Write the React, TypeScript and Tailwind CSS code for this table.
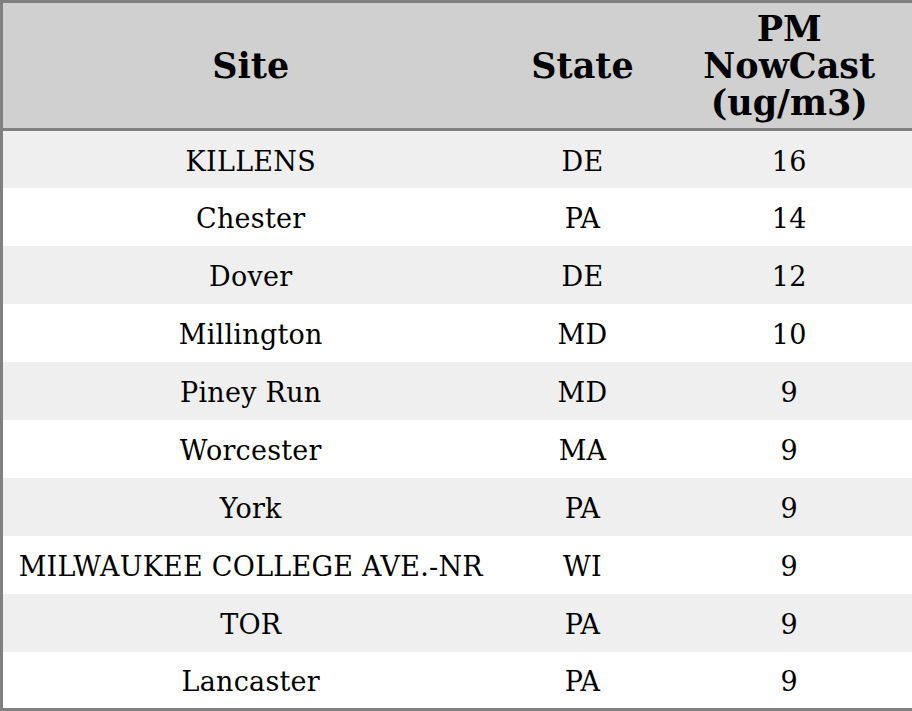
import React from 'react';

const rows = [
  { site: 'KILLENS', state: 'DE', pm: 16 },
  { site: 'Chester', state: 'PA', pm: 14 },
  { site: 'Dover', state: 'DE', pm: 12 },
  { site: 'Millington', state: 'MD', pm: 10 },
  { site: 'Piney Run', state: 'MD', pm: 9 },
  { site: 'Worcester', state: 'MA', pm: 9 },
  { site: 'York', state: 'PA', pm: 9 },
  { site: 'MILWAUKEE COLLEGE AVE.-NR', state: 'WI', pm: 9 },
  { site: 'TOR', state: 'PA', pm: 9 },
  { site: 'Lancaster', state: 'PA', pm: 9 },
];

export default function App() {
  return (
    <div className="w-[912px] h-[711px] bg-white" style={{ fontFamily: '"DejaVu Serif", serif' }}>
      <table className="w-[912px] border-collapse table-fixed border-[3px] border-[#808080] text-black">
        <colgroup>
          <col className="w-[497px]" />
          <col className="w-[168px]" />
          <col className="w-[247px]" />
        </colgroup>
        <thead>
          <tr className="bg-[#d0d0d0] border-b-[3px] border-[#808080]">
            <th className="h-[128px] p-0 text-[35px] leading-[37px] font-bold text-center align-middle">Site</th>
            <th className="h-[128px] p-0 text-[35px] leading-[37px] font-bold text-center align-middle">State</th>
            <th className="h-[128px] p-0 text-[35px] leading-[37px] font-bold text-center align-middle">
              PM<br />NowCast<br />(ug/m3)
            </th>
          </tr>
        </thead>
        <tbody>
          {rows.map((r, i) => (
            <tr key={i} className={i % 2 === 0 ? 'bg-[#efefef]' : 'bg-white'}>
              <td className="h-[58px] p-0 pt-[5px] text-[27px] leading-[32px] tracking-[0.25px] text-center align-middle">{r.site}</td>
              <td className="h-[58px] p-0 pt-[5px] text-[27px] leading-[32px] tracking-[0.25px] text-center align-middle">{r.state}</td>
              <td className="h-[58px] p-0 pt-[5px] text-[27px] leading-[32px] tracking-[0.25px] text-center align-middle">{r.pm}</td>
            </tr>
          ))}
        </tbody>
      </table>
    </div>
  );
}
